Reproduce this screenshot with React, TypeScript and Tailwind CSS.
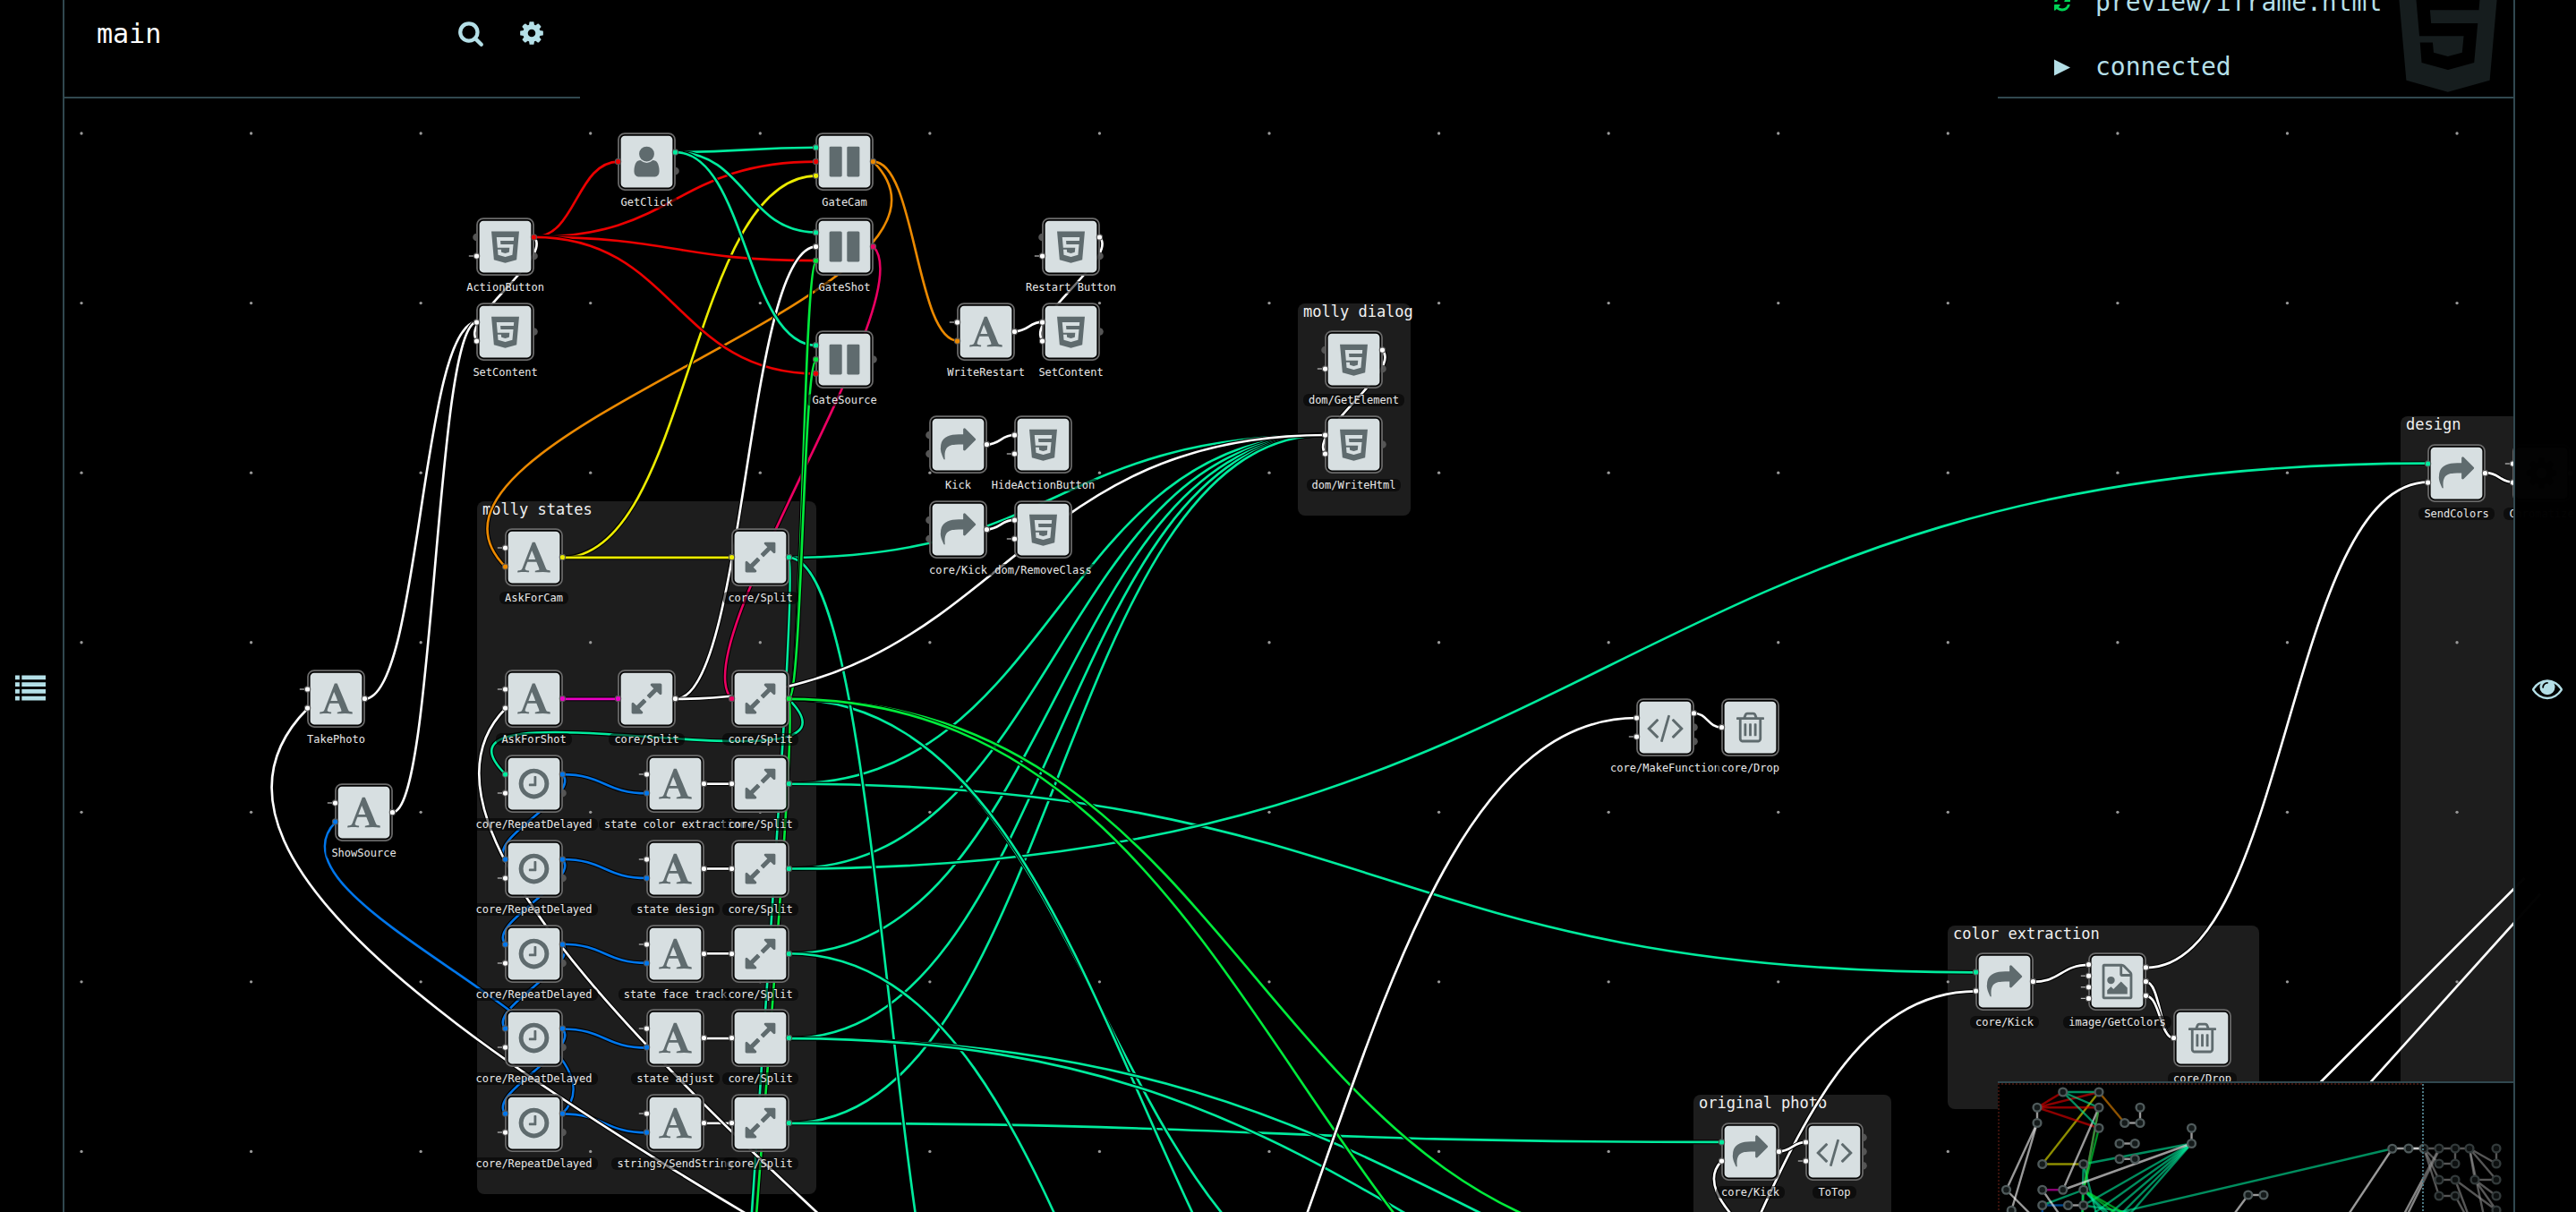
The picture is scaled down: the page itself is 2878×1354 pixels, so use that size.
import React from "react";

/* ---------- icon glyphs (1792 units per em, y pointing up) ---------- */

type Glyph = { w: number; d: string };

const GLYPHS: Record<string, Glyph> = {
  user: { w: 1280, d: "M1280 137q0 -109 -62.5 -187t-150.5 -78h-854q-88 0 -150.5 78t-62.5 187q0 85 8.5 160.5t31.5 152t58.5 131t94 89t134.5 34.5q131 -128 313 -128t313 128q76 0 134.5 -34.5t94 -89t58.5 -131t31.5 -152t8.5 -160.5zM1024 1024q0 -159 -112.5 -271.5t-271.5 -112.5t-271.5 112.5t-112.5 271.5t112.5 271.5t271.5 112.5t271.5 -112.5t112.5 -271.5z" },
  pause: { w: 1536, d: "M1536 1344v-1408q0 -26 -19 -45t-45 -19h-512q-26 0 -45 19t-19 45v1408q0 26 19 45t45 19h512q26 0 45 -19t19 -45zM640 1344v-1408q0 -26 -19 -45t-45 -19h-512q-26 0 -45 19t-19 45v1408q0 26 19 45t45 19h512q26 0 45 -19t19 -45z" },
  html5: { w: 1408, d: "M1130 939l16 175h-884l47 -534h612l-22 -228l-197 -53l-196 53l-13 140h-175l22 -278l362 -100h4v1l359 99l50 544h-644l-15 181h674zM0 1408h1408l-128 -1438l-578 -162l-574 162z" },
  font: { w: 1664, d: "M725 977l-170 -450q33 0 136.5 -2t160.5 -2q19 0 57 2q-87 253 -184 452zM0 -128l2 79q23 7 56 12.5t57 10.5t49.5 14.5t44.5 29t31 50.5l237 616l280 724h75h53q8 -14 11 -21l205 -480q33 -78 106 -257.5t114 -274.5q15 -34 58 -144.5t72 -168.5q20 -45 35 -57q19 -15 88 -29.5t84 -20.5q6 -38 6 -57q0 -5 -0.5 -13.5t-0.5 -12.5q-63 0 -190 8t-191 8q-76 0 -215 -7t-178 -8q0 43 4 78l131 28q1 0 12.5 2.5t15.5 3.5t14.5 4.5t15 6.5t11 8t9 11t2.5 14q0 16 -31 96.5t-72 177.5t-42 100l-450 2q-26 -58 -76.5 -195.5t-50.5 -162.5q0 -22 14 -37.5t43.5 -24.5t48.5 -13.5t57 -8.5t41 -4q1 -19 1 -58q0 -9 -2 -27q-58 0 -174.5 10t-174.5 10q-8 0 -26.5 -4t-21.5 -4q-80 -14 -188 -14z" },
  share: { w: 1792, d: "M1792 896q0 -26 -19 -45l-512 -512q-19 -19 -45 -19t-45 19t-19 45v256h-224q-98 0 -175.5 -6t-154 -21.5t-133 -42.5t-105.5 -69.5t-80 -101t-48.5 -138.5t-17.5 -181q0 -55 5 -123q0 -6 2.5 -23.5t2.5 -26.5q0 -15 -8.5 -25t-23.5 -10q-16 0 -28 17q-7 9 -13 22t-13.5 30t-10.5 24q-127 285 -127 451q0 199 53 333q162 403 875 403h224v256q0 26 19 45t45 19t45 -19l512 -512q19 -19 19 -45z" },
  expand: { w: 1536, d: "M755 480q0 -13 -10 -23l-332 -332l144 -144q19 -19 19 -45t-19 -45t-45 -19h-448q-26 0 -45 19t-19 45v448q0 26 19 45t45 19t45 -19l144 -144l332 332q10 10 23 10t23 -10l114 -114q10 -10 10 -23zM1536 1344v-448q0 -26 -19 -45t-45 -19t-45 19l-144 144l-332 -332q-10 -10 -23 -10t-23 10l-114 114q-10 10 -10 23t10 23l332 332l-144 144q-19 19 -19 45t19 45t45 19h448q26 0 45 -19t19 -45z" },
  clock: { w: 1536, d: "M896 992v-448q0 -14 -9 -23t-23 -9h-320q-14 0 -23 9t-9 23v64q0 14 9 23t23 9h224v352q0 14 9 23t23 9h64q14 0 23 -9t9 -23zM1312 640q0 148 -73 273t-198 198t-273 73t-273 -73t-198 -198t-73 -273t73 -273t198 -198t273 -73t273 73t198 198t73 273zM1536 640q0 -209 -103 -385.5t-279.5 -279.5t-385.5 -103t-385.5 103t-279.5 279.5t-103 385.5t103 385.5t279.5 279.5t385.5 103t385.5 -103t279.5 -279.5t103 -385.5z" },
  code: { w: 1920, d: "M617 137l-50 -50q-10 -10 -23 -10t-23 10l-466 466q-10 10 -10 23t10 23l466 466q10 10 23 10t23 -10l50 -50q10 -10 10 -23t-10 -23l-393 -393l393 -393q10 -10 10 -23t-10 -23zM1208 1204l-373 -1291q-4 -13 -15.5 -19.5t-23.5 -2.5l-62 17q-13 4 -19.5 15.5t-2.5 24.5l373 1291q4 13 15.5 19.5t23.5 2.5l62 -17q13 -4 19.5 -15.5t2.5 -24.5zM1865 553l-466 -466q-10 -10 -23 -10t-23 10l-50 50q-10 10 -10 23t10 23l393 393l-393 393q-10 10 -10 23t10 23l50 50q10 10 23 10t23 -10l466 -466q10 -10 10 -23t-10 -23z" },
  trash: { w: 1408, d: "M512 800v-576q0 -14 -9 -23t-23 -9h-64q-14 0 -23 9t-9 23v576q0 14 9 23t23 9h64q14 0 23 -9t9 -23zM768 800v-576q0 -14 -9 -23t-23 -9h-64q-14 0 -23 9t-9 23v576q0 14 9 23t23 9h64q14 0 23 -9t9 -23zM1024 800v-576q0 -14 -9 -23t-23 -9h-64q-14 0 -23 9t-9 23v576q0 14 9 23t23 9h64q14 0 23 -9t9 -23zM1152 76v948h-896v-948q0 -22 7 -40.5t14.5 -27t10.5 -8.5h832q3 0 10.5 8.5t14.5 27t7 40.5zM480 1152h448l-48 117q-7 9 -17 11h-317q-10 -2 -17 -11zM1408 1120v-64q0 -14 -9 -23t-23 -9h-96v-948q0 -83 -47 -143.5t-113 -60.5h-832q-66 0 -113 58.5t-47 141.5v952h-96q-14 0 -23 9t-9 23v64q0 14 9 23t23 9h309l70 167q15 37 54 63t79 26h320q40 0 79 -26t54 -63l70 -167h309q14 0 23 -9t9 -23z" },
  image: { w: 1536, d: "M1468 1156q28 -28 48 -76t20 -88v-1152q0 -40 -28 -68t-68 -28h-1344q-40 0 -68 28t-28 68v1600q0 40 28 68t68 28h896q40 0 88 -20t76 -48zM1024 1400v-376h376q-10 29 -22 41l-313 313q-12 12 -41 22zM1408 -128v1024h-416q-40 0 -68 28t-28 68v416h-768v-1536h1280zM1280 320v-320h-1024v192l192 192l128 -128l384 384zM448 512q-80 0 -136 56t-56 136t56 136t136 56t136 -56t56 -136t-56 -136t-136 -56z" },
  search: { w: 1664, d: "M1152 704q0 185 -131.5 316.5t-316.5 131.5t-316.5 -131.5t-131.5 -316.5t131.5 -316.5t316.5 -131.5t316.5 131.5t131.5 316.5zM1664 -128q0 -52 -38 -90t-90 -38q-54 0 -90 38l-343 342q-179 -124 -399 -124q-143 0 -273.5 55.5t-225 150t-150 225t-55.5 273.5t55.5 273.5t150 225t225 150t273.5 55.5t273.5 -55.5t225 -150t150 -225t55.5 -273.5q0 -220 -124 -399l343 -343q37 -37 37 -90z" },
  cog: { w: 1536, d: "M1024 640q0 106 -75 181t-181 75t-181 -75t-75 -181t75 -181t181 -75t181 75t75 181zM1536 749v-222q0 -12 -8 -23t-20 -13l-185 -28q-19 -54 -39 -91q35 -50 107 -138q10 -12 10 -25t-9 -23q-27 -37 -99 -108t-94 -71q-12 0 -26 9l-138 108q-44 -23 -91 -38q-16 -136 -29 -186q-7 -28 -36 -28h-222q-14 0 -24.5 8.5t-11.5 21.5l-28 184q-49 16 -90 37l-141 -107q-10 -9 -25 -9q-14 0 -25 11q-126 114 -165 168q-7 10 -7 23q0 12 8 23q15 21 51 66.5t54 70.5q-27 50 -41 99l-183 27q-13 2 -21 12.5t-8 23.5v222q0 12 8 23t19 13l186 28q14 46 39 92q-40 57 -107 138q-10 12 -10 24q0 10 9 23q26 36 98.5 107.5t94.5 71.5q13 0 26 -10l138 -107q44 23 91 38q16 136 29 186q7 28 36 28h222q14 0 24.5 -8.5t11.5 -21.5l28 -184q49 -16 90 -37l142 107q9 9 24 9q13 0 25 -10q129 -119 165 -170q7 -8 7 -22q0 -12 -8 -23q-15 -21 -51 -66.5t-54 -70.5q26 -50 41 -98l183 -28q13 -2 21 -12.5t8 -23.5z" },
  eye: { w: 1792, d: "M1664 576q-152 236 -381 353q61 -104 61 -225q0 -185 -131.5 -316.5t-316.5 -131.5t-316.5 131.5t-131.5 316.5q0 121 61 225q-229 -117 -381 -353q133 -205 333.5 -326.5t434.5 -121.5t434.5 121.5t333.5 326.5zM944 960q0 20 -14 34t-34 14q-125 0 -214.5 -89.5t-89.5 -214.5q0 -20 14 -34t34 -14t34 14t14 34q0 86 61 147t147 61q20 0 34 14t14 34zM1792 576q0 -34 -20 -69q-140 -230 -376.5 -368.5t-499.5 -138.5t-499.5 139t-376.5 368q-20 35 -20 69t20 69q140 229 376.5 368t499.5 139t499.5 -139t376.5 -368q20 -35 20 -69z" },
  refresh: { w: 1536, d: "M1511 480q0 -5 -1 -7q-64 -268 -268 -434.5t-478 -166.5q-146 0 -282.5 55t-243.5 157l-129 -129q-19 -19 -45 -19t-45 19t-19 45v448q0 26 19 45t45 19h448q26 0 45 -19t19 -45t-19 -45l-137 -137q71 -66 161 -102t187 -36q134 0 250 65t186 179q11 17 53 117q8 23 30 23h192q13 0 22.5 -9.5t9.5 -22.5zM1536 1280v-448q0 -26 -19 -45t-45 -19h-448q-26 0 -45 19t-19 45t19 45l138 138q-148 137 -349 137q-134 0 -250 -65t-186 -179q-11 -17 -53 -117q-8 -23 -30 -23h-199q-13 0 -22.5 9.5t-9.5 22.5v7q65 268 270 434.5t480 166.5q146 0 284 -55.5t245 -156.5l130 129q19 19 45 19t45 -19t19 -45z" },
  play: { w: 1536, d: "M0 1408v-1536l1536 768z" },
  list: { w: 1792, d: "M0 1408h256v-256h-256zM384 1408h1408v-256h-1408zM0 1000h256v-256h-256zM384 1000h1408v-256h-1408zM0 592h256v-256h-256zM384 592h1408v-256h-1408zM0 184h256v-256h-256zM384 184h1408v-256h-1408z" },
};

function Icon({ name, className }: { name: string; className: string }) {
  const g = GLYPHS[name];
  return (
    <svg viewBox={`0 -1536 ${g.w} 1792`} className={className} fill="currentColor" aria-hidden="true">
      <path d={g.d} transform="scale(1 -1)" />
    </svg>
  );
}

/* ---------- graph data (graph units; 36 units per grid step) ---------- */

const SCALE = 0.87766;
const ORIGIN_X = 91;
const ORIGIN_Y = 149;
const STEP = 36;

const C: Record<string, string> = {
  w: "#ffffff",
  red: "#eb0000",
  orange: "#eb8900",
  yellow: "#ebeb00",
  green: "#00eb3b",
  teal: "#00eb9d",
  blue: "#0076eb",
  magenta: "#eb00c4",
  pink: "#eb0062",
};

/* Port codes: "-" unconnected, "iip" constant value, otherwise a key of C. */
type Node = { id: string; x: number; y: number; icon: string; label: string; ins: string[]; outs: string[] };

const n = (id: string, x: number, y: number, icon: string, label: string, ins: string, outs: string): Node => ({
  id, x, y, icon, label,
  ins: ins ? ins.split(" ") : [],
  outs: outs ? outs.split(" ") : [],
});

const NODES: Node[] = [
  n("click", 19, 0, "user", "GetClick", "red", "teal -"),
  n("gcam", 26, 0, "pause", "GateCam", "teal red yellow", "orange"),
  n("action", 14, 3, "html5", "ActionButton", "- iip", "red -"),
  n("set", 14, 6, "html5", "SetContent", "w w", "-"),
  n("gshot", 26, 3, "pause", "GateShot", "teal w green", "pink"),
  n("gsrc", 26, 7, "pause", "GateSource", "teal green red", "-"),
  n("restart", 34, 3, "html5", "Restart Button", "- iip", "w -"),
  n("write", 31, 6, "font", "WriteRestart", "iip orange", "w"),
  n("set2", 34, 6, "html5", "SetContent", "w w", "-"),
  n("kick1", 30, 10, "share", "Kick", "- -", "w"),
  n("hide", 33, 10, "html5", "HideActionButton", "w iip", ""),
  n("kick2", 30, 13, "share", "core/Kick", "- -", "w"),
  n("remove", 33, 13, "html5", "dom/RemoveClass", "w iip", ""),
  n("getel", 44, 7, "html5", "dom/GetElement", "- iip", "w -"),
  n("html", 44, 10, "html5", "dom/WriteHtml", "w w", "-"),
  n("askcam", 15, 14, "font", "AskForCam", "iip orange", "yellow"),
  n("sp14", 23, 14, "expand", "core/Split", "yellow", "teal"),
  n("askshot", 15, 19, "font", "AskForShot", "iip w", "magenta"),
  n("sp19a", 19, 19, "expand", "core/Split", "magenta", "w"),
  n("sp19", 23, 19, "expand", "core/Split", "pink", "green"),
  n("rd22", 15, 22, "clock", "core/RepeatDelayed", "teal iip", "blue -"),
  n("st22", 20, 22, "font", "state color extraction", "iip blue", "w"),
  n("sp22", 23, 22, "expand", "core/Split", "w", "teal"),
  n("rd25", 15, 25, "clock", "core/RepeatDelayed", "blue iip", "blue -"),
  n("st25", 20, 25, "font", "state design", "iip blue", "w"),
  n("sp25", 23, 25, "expand", "core/Split", "w", "teal"),
  n("rd28", 15, 28, "clock", "core/RepeatDelayed", "blue iip", "blue -"),
  n("st28", 20, 28, "font", "state face track", "iip blue", "w"),
  n("sp28", 23, 28, "expand", "core/Split", "w", "teal"),
  n("rd31", 15, 31, "clock", "core/RepeatDelayed", "blue iip", "blue -"),
  n("st31", 20, 31, "font", "state adjust", "iip blue", "w"),
  n("sp31", 23, 31, "expand", "core/Split", "w", "teal"),
  n("rd34", 15, 34, "clock", "core/RepeatDelayed", "blue iip", "blue -"),
  n("st34", 20, 34, "font", "strings/SendString", "iip blue", "w"),
  n("sp34", 23, 34, "expand", "core/Split", "w", "teal"),
  n("photo", 8, 19, "font", "TakePhoto", "iip w", "w"),
  n("source", 9, 23, "font", "ShowSource", "iip blue", "w"),
  n("make", 55, 20, "code", "core/MakeFunction", "w iip", "w - -"),
  n("drop1", 58, 20, "trash", "core/Drop", "w", ""),
  n("ckick", 67, 29, "share", "core/Kick", "teal w", "w"),
  n("colors", 71, 29, "image", "image/GetColors", "w iip iip iip", "w w w"),
  n("drop2", 74, 31, "trash", "core/Drop", "w", ""),
  n("okick", 58, 35, "share", "core/Kick", "teal w", "w"),
  n("totop", 61, 35, "code", "ToTop", "w iip", "- - -"),
  n("send", 83, 11, "share", "SendColors", "teal w", "w"),
  n("chroma", 86, 11, "cog", "Chromatize", "iip w", "w"),
];

const BY_ID: Record<string, Node> = Object.fromEntries(NODES.map((v) => [v.id, v]));

/* An end is either [node id, port index] or a free point [x, y] in graph units. */
type End = [string | number, number];
type Edge = [string, End, End];

const EDGES: Edge[] = [
  ["w", ["action", 0], ["set", 1]],
  ["w", ["restart", 0], ["set2", 1]],
  ["w", ["getel", 0], ["html", 1]],
  ["w", ["write", 0], ["set2", 0]],
  ["w", ["kick1", 0], ["hide", 0]],
  ["orange", ["gcam", 0], ["askcam", 1]],
  ["orange", ["gcam", 0], ["write", 1]],
  ["yellow", ["askcam", 0], ["gcam", 2]],
  ["yellow", ["askcam", 0], ["sp14", 0]],
  ["red", ["action", 0], ["click", 0]],
  ["red", ["action", 0], ["gcam", 1]],
  ["red", ["action", 0], ["gshot", 2]],
  ["red", ["action", 0], ["gsrc", 2]],
  ["pink", ["gshot", 0], ["sp19", 0]],
  ["w", ["sp19a", 0], ["gshot", 1]],
  ["teal", ["click", 0], ["gcam", 0]],
  ["teal", ["click", 0], ["gshot", 0]],
  ["teal", ["click", 0], ["gsrc", 0]],
  ["magenta", ["askshot", 0], ["sp19a", 0]],
  ["blue", ["rd22", 0], ["st22", 1]],
  ["blue", ["rd25", 0], ["st25", 1]],
  ["blue", ["rd28", 0], ["st28", 1]],
  ["blue", ["rd31", 0], ["st31", 1]],
  ["blue", ["rd34", 0], ["st34", 1]],
  ["blue", ["rd22", 0], ["rd25", 0]],
  ["blue", ["rd25", 0], ["rd28", 0]],
  ["blue", ["rd28", 0], ["rd31", 0]],
  ["blue", ["rd31", 0], ["rd34", 0]],
  ["blue", ["rd34", 0], ["source", 1]],
  ["w", ["st22", 0], ["sp22", 0]],
  ["w", ["st25", 0], ["sp25", 0]],
  ["w", ["st28", 0], ["sp28", 0]],
  ["w", ["st31", 0], ["sp31", 0]],
  ["w", ["st34", 0], ["sp34", 0]],
  ["teal", ["sp14", 0], ["html", 0]],
  ["teal", ["sp22", 0], ["html", 0]],
  ["teal", ["sp25", 0], ["html", 0]],
  ["teal", ["sp28", 0], ["html", 0]],
  ["teal", ["sp31", 0], ["html", 0]],
  ["teal", ["sp34", 0], ["html", 0]],
  ["teal", ["sp22", 0], ["ckick", 0]],
  ["teal", ["sp25", 0], ["send", 0]],
  ["teal", ["sp34", 0], ["okick", 0]],
  ["teal", ["sp19", 0], ["rd22", 0]],
  ["teal", ["sp19", 0], [1695, 1506]],
  ["teal", ["sp19", 0], [1800, 1743]],
  ["teal", ["sp14", 0], [1158, 1676]],
  ["teal", ["sp14", 0], [828, 1890]],
  ["teal", ["sp28", 0], [1697, 1980]],
  ["teal", ["sp31", 0], [2643, 1587]],
  ["teal", ["sp31", 0], [2518, 1625]],
  ["green", ["sp19", 0], ["gshot", 2]],
  ["green", ["sp19", 0], ["gsrc", 1]],
  ["green", ["sp19", 0], [828, 1908]],
  ["green", ["sp19", 0], [2088, 1428]],
  ["green", ["sp19", 0], [2196, 1680]],
  ["w", ["sp19a", 0], ["html", 0]],
  ["w", ["kick2", 0], ["remove", 0]],
  ["w", ["photo", 0], ["set", 0]],
  ["w", ["source", 0], ["set", 0]],
  ["w", [1913, 2317], ["photo", 1]],
  ["w", [1740, 2387], ["askshot", 1]],
  ["w", [1182, 1887], ["make", 0]],
  ["w", ["make", 0], ["drop1", 0]],
  ["w", [1820, 1753], ["ckick", 1]],
  ["w", ["ckick", 0], ["colors", 0]],
  ["w", ["colors", 0], ["send", 1]],
  ["w", ["colors", 1], ["drop2", 0]],
  ["w", ["colors", 2], ["drop2", 0]],
  ["w", ["okick", 0], ["totop", 0]],
  ["w", [2438, 1708], ["okick", 1]],
  ["w", ["send", 0], ["chroma", 1]],
];

const GROUPS = [
  { name: "molly states", x: 14, y: 13, w: 12, h: 24.5 },
  { name: "molly dialog", x: 43, y: 6, w: 4, h: 7.5 },
  { name: "color extraction", x: 66, y: 28, w: 11, h: 6.5 },
  { name: "original photo", x: 57, y: 34, w: 7, h: 6 },
  { name: "design", x: 82, y: 10, w: 20, h: 36 },
];

function portY(count: number, index: number) {
  return (72 / (count + 1)) * (index + 1);
}

function point(end: End, side: "out" | "in"): [number, number] {
  if (typeof end[0] === "number") return [end[0], end[1]];
  const node = BY_ID[end[0]];
  const count = side === "out" ? node.outs.length : node.ins.length;
  return [node.x * STEP + (side === "out" ? 72 : 0), node.y * STEP + portY(count, end[1])];
}

/* Wires that run backwards stick out at both ends before they turn round. */
function curve([sx, sy]: [number, number], [tx, ty]: [number, number], bend: number) {
  if (tx - 5 < sx) {
    const f = (sx - tx) * bend;
    const dir = ty > sy ? 1 : -1;
    return `M${sx} ${sy}C${sx + f} ${sy + dir * f} ${tx - f} ${ty - dir * f} ${tx} ${ty}`;
  }
  const mx = (sx + tx) / 2;
  return `M${sx} ${sy}C${mx} ${sy} ${mx} ${ty} ${tx} ${ty}`;
}

const px = (grid: number, origin: number) => Math.round(origin + grid * STEP * SCALE);

function Wires() {
  const dots: React.ReactNode[] = [];
  for (let i = 0; i < 15; i++)
    for (let j = 0; j < 7; j++) dots.push(<circle key={`${i}-${j}`} cx={i * 216} cy={j * 216} r="1.9" fill="#999" />);
  return (
    <svg className="absolute inset-0 size-full" aria-hidden="true">
      <g transform={`translate(${ORIGIN_X} ${ORIGIN_Y}) scale(${SCALE})`} fill="none">
        {dots}
        {EDGES.map(([color, from, to], i) => {
          const loose = typeof from[0] === "number" || typeof to[0] === "number";
          const d = curve(point(from, "out"), point(to, "in"), loose ? 0.25 : 0.36);
          return (
            <g key={i}>
              <path d={d} stroke="#000" strokeWidth="5.5" />
              <path d={d} stroke={C[color]} strokeWidth="3" />
            </g>
          );
        })}
        <path d="M2848 1210L3110 948M2912 1210L3130 968" stroke="#fff" strokeWidth="3" />
      </g>
    </svg>
  );
}

function Port({ x, y, kind, side }: { x: number; y: number; kind: string; side: "in" | "out" }) {
  if (kind === "-") {
    return (
      <path
        d={side === "in" ? `M${x} ${y - 5}A5 5 0 0 0 ${x} ${y + 5}z` : `M${x} ${y - 5}A5 5 0 0 1 ${x} ${y + 5}z`}
        fill="#555"
      />
    );
  }
  return (
    <g>
      {kind === "iip" && <path d={`M${x - 10} ${y}h7`} stroke="#bbb" strokeWidth="1.4" />}
      <circle cx={x} cy={y} r="3.6" fill={kind === "iip" ? C.w : C[kind]} stroke="#555" strokeWidth="1.2" />
    </g>
  );
}

function NodeCard({ node }: { node: Node }) {
  const g = GLYPHS[node.icon];
  const s = 45 / 1792;
  return (
    <div
      className="absolute flex w-[63px] flex-col items-center"
      style={{ left: px(node.x, ORIGIN_X), top: px(node.y, ORIGIN_Y) }}
    >
      <svg viewBox="0 0 72 72" className="block size-[63px] shrink-0 overflow-visible" aria-hidden="true">
        <rect x="0" y="0" width="72" height="72" rx="8" fill="#000" fillOpacity="0.9" stroke="#6a6a6a" strokeWidth="2" />
        <rect x="3" y="3" width="66" height="66" rx="5" fill="#dbe3e5" fillOpacity="0.98" />
        <path
          d={g.d}
          transform={`translate(${36 - (g.w * s) / 2} ${36 + 640 * s}) scale(${s} ${-s})`}
          fill="#5f6b6e"
        />
        {node.ins.map((k, i) => (
          <Port key={`i${i}`} x={-0.5} y={portY(node.ins.length, i)} kind={k} side="in" />
        ))}
        {node.outs.map((k, i) => (
          <Port key={`o${i}`} x={72.5} y={portY(node.outs.length, i)} kind={k} side="out" />
        ))}
      </svg>
      <span className="mt-[7px] rounded-md bg-black/55 px-[6px] text-[12px] leading-[14px] whitespace-nowrap text-[#e8e8e8]">
        {node.label}
      </span>
    </div>
  );
}

/* ---------- minimap ---------- */

const MINI_STEP = 5.75;
const miniX = (u: number) => 113 + (u / STEP - 1 - 26) * MINI_STEP;
const miniY = (u: number) => 10 + (u / STEP - 1) * MINI_STEP;

const FAR: [number, number][] = [
  [476, 73], [493, 73], [511, 73], [527, 73], [557, 73],
  [493, 90], [511, 90], [557, 90],
  [493, 108], [511, 108], [533, 108], [557, 108],
  [493, 126], [511, 126], [557, 126], [557, 142],
];

const FAR_LINES: [number, number, number, number][] = [
  [459, 73, 527, 73], [511, 73, 511, 90], [493, 90, 511, 90], [557, 73, 557, 90],
  [527, 73, 557, 90], [527, 73, 557, 108], [527, 73, 533, 108], [527, 73, 543, 148],
  [533, 108, 557, 108], [533, 108, 557, 126], [533, 108, 557, 142], [493, 108, 511, 108],
  [511, 108, 557, 142], [511, 108, 526, 148], [493, 126, 511, 126], [511, 126, 523, 148],
  [476, 73, 493, 90], [476, 73, 493, 108], [476, 73, 493, 126],
  [493, 73, 453, 148], [493, 75, 457, 148],
];

function Minimap() {
  const centre = (end: End): [number, number] => {
    if (typeof end[0] === "number") return [miniX(end[0]), miniY(end[1])];
    const v = BY_ID[end[0]];
    return [miniX(v.x * STEP + 36), miniY(v.y * STEP + 36)];
  };
  const shown = NODES.filter((v) => v.id !== "chroma");
  return (
    <svg className="block h-[144px] w-full" aria-hidden="true">
      <g strokeWidth="2.4" strokeOpacity="0.6">
        {EDGES.filter((e) => e[2][0] !== "chroma" && e[2][0] !== "askcam").map(([color, a, b], i) => {
          const [x1, y1] = centre(a);
          const [x2, y2] = centre(b);
          return <line key={i} x1={x1} y1={y1} x2={x2} y2={y2} stroke={C[color]} />;
        })}
        {FAR_LINES.map(([x1, y1, x2, y2], i) => (
          <line key={`f${i}`} x1={x1} y1={y1} x2={x2} y2={y2} stroke="#ddd" />
        ))}
        <line x1={441} y1={73} x2={476} y2={73} stroke="#fff" />
      </g>
      <g fill="#141a1a" stroke="#4f5a5b" strokeWidth="2.4">
        {shown.map((v) => (
          <circle key={v.id} cx={miniX(v.x * STEP + 36)} cy={miniY(v.y * STEP + 36)} r="4.4" />
        ))}
        <circle cx="459" cy="73" r="4.4" />
        {FAR.map(([x, y]) => (
          <circle key={`${x}-${y}`} cx={x} cy={y} r="4.4" />
        ))}
      </g>
      <rect x="475" y="0" width="101" height="146" fill="#000" fillOpacity="0.35" />
      <path d="M1 146V1H474" fill="none" stroke="#3a120c" strokeWidth="2" strokeDasharray="2 2" />
      <path d="M475 1V146" stroke="#4c7883" strokeWidth="2" strokeDasharray="2 2" />
    </svg>
  );
}

/* ---------- page ---------- */

export default function App() {
  return (
    <div className="relative h-screen w-full overflow-hidden bg-black font-['DejaVu_Sans_Mono','Liberation_Mono',monospace] text-white">
      <main className="absolute inset-0" aria-label="Graph canvas">
        {GROUPS.map((g) => (
          <section
            key={g.name}
            className="absolute rounded-lg bg-[#1d1d1d]"
            style={{
              left: px(g.x, ORIGIN_X),
              top: px(g.y, ORIGIN_Y),
              width: Math.round(g.w * STEP * SCALE),
              height: Math.round(g.h * STEP * SCALE),
            }}
          >
            <h2 className="pl-1.5 text-[17px] leading-[18px] whitespace-nowrap text-[#f0f0f0]">{g.name}</h2>
          </section>
        ))}
        <Wires />
        {NODES.map((v) => (
          <NodeCard key={v.id} node={v} />
        ))}
      </main>

      <div className="pointer-events-none relative flex h-screen justify-between text-[#b4dfe7]">
        <nav className="pointer-events-auto flex w-[72px] flex-col border-r-2 border-[#31484f] bg-black/99">
          <div className="basis-5/9" />
          <button type="button" aria-label="Component list" className="ml-[17px] w-[34px]">
            <Icon name="list" className="size-[34px]" />
          </button>
        </nav>

        <div className="flex min-w-0 flex-1 flex-col justify-between">
          <div className="flex justify-between">
            <header className="pointer-events-auto flex h-[110px] w-[576px] items-start border-b-2 border-[#31484f] bg-black/99 pt-[22px] pr-[41px] pl-9">
              <h1 className="flex-1 text-[30px] leading-8 text-white">main</h1>
              <button type="button" aria-label="Search" className="mr-[41px]">
                <Icon name="search" className="h-[30px] w-[28px]" />
              </button>
              <button type="button" aria-label="Settings">
                <Icon name="cog" className="h-[30px] w-[26px]" />
              </button>
            </header>

            <aside className="pointer-events-auto relative flex h-[110px] w-[576px] flex-col justify-end overflow-hidden border-b-2 border-[#31484f] bg-black/99 pb-[17px] pl-[63px]">
              <Icon name="html5" className="absolute -top-[37px] right-4 h-[145px] w-[114px] text-[#161d1e]" />
              <a href="#preview" className="relative mb-10 flex items-center gap-7 text-[28px] leading-8">
                <Icon name="refresh" className="h-[21px] w-[18px] shrink-0 text-[#00d455]" />
                preview/iframe.html
              </a>
              <button type="button" className="relative flex items-center gap-7 text-[28px] leading-8">
                <Icon name="play" className="h-[21px] w-[18px] shrink-0" />
                connected
              </button>
            </aside>
          </div>

          <div className="flex justify-end">
            <div className="pointer-events-auto w-[576px] border-t-2 border-[#31484f] bg-black">
              <Minimap />
            </div>
          </div>
        </div>

        <nav className="pointer-events-auto flex w-[70px] flex-col border-l-2 border-[#31484f] bg-black/99">
          <div className="basis-5/9" />
          <button type="button" aria-label="Toggle preview" className="ml-[19px] w-[34px]">
            <Icon name="eye" className="size-[34px]" />
          </button>
        </nav>
      </div>
    </div>
  );
}
